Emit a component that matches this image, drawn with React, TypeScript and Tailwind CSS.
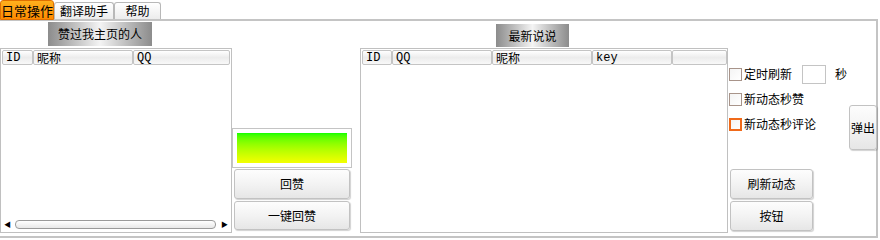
import React from 'react';

const FONT = { fontFamily: '"Noto Sans CJK SC", "Noto Sans", sans-serif' };

const HeaderCell: React.FC<{ label: string; width: string; mono?: boolean }> = ({ label, width, mono }) => (
  <div
    className={`${width} h-[15px] shrink-0 border border-[#c4c4c4] rounded-[2px] bg-linear-to-b from-[#ffffff] via-[#ececec] to-[#f8f8f8] flex items-center pl-[3px] text-[12px] leading-none text-black`}
    style={mono ? { fontFamily: '"Liberation Mono", monospace' } : undefined}
  >
    {label}
  </div>
);

const Btn: React.FC<{ label: string; className: string }> = ({ label, className }) => (
  <div
    className={`${className} shrink-0 border border-[#c2c2c2] rounded-[3px] bg-linear-to-b from-[#fdfdfd] via-[#f3f3f3] to-[#e6e6e6] shadow-[1px_1px_1px_rgba(0,0,0,0.18)] flex items-center justify-center text-[12px] text-black`}
  >
    {label}
  </div>
);

const Check: React.FC<{ label: string; active?: boolean }> = ({ label, active }) => (
  <div className="flex items-center">
    <div
      className={`w-[13px] h-[13px] ml-[1px] bg-linear-to-br from-[#f4f4f4] to-[#ffffff] ${
        active ? 'border-2 border-[#f06a1a]' : 'border border-[#a8948a]'
      }`}
    />
    <span className="ml-[2px] text-[12px] leading-none text-black">{label}</span>
  </div>
);

const GrayTitle: React.FC<{ label: string; className: string }> = ({ label, className }) => (
  <div
    className={`${className} shrink-0 bg-linear-to-r from-[#8c8c8c] via-[#f4f4f4] to-[#8c8c8c] flex items-center justify-center text-[12px] text-black`}
  >
    {label}
  </div>
);

export default function App() {
  return (
    <div className="w-[880px] h-[240px] bg-white overflow-hidden" style={FONT}>
      {/* tabs */}
      <div className="flex h-[19px] items-end">
        <div className="w-[54px] h-[20px] self-start border border-[#e07000] rounded-t-[3px] bg-linear-to-b from-[#ffb01c] to-[#ff8a00] flex items-center text-[13px] text-black leading-none pl-[0px]">
          日常操作
        </div>
        <div className="w-[60px] h-[17px] border border-[#b8b8b8] border-b-0 rounded-t-[3px] bg-linear-to-b from-[#ffffff] to-[#ececec] flex items-center justify-center text-[12px] text-black leading-none">
          翻译助手
        </div>
        <div className="w-[47px] h-[17px] border border-[#b8b8b8] border-b-0 rounded-t-[3px] bg-linear-to-b from-[#ffffff] to-[#ececec] flex items-center justify-center text-[12px] text-black leading-none">
          帮助
        </div>
      </div>

      {/* panel */}
      <div className="w-[878px] h-[219px] border-t-2 border-r-2 border-b-2 border-[#c4c4c4] flex">
        {/* left list */}
        <div className="w-[232px] shrink-0 flex flex-col">
          <GrayTitle label="赞过我主页的人" className="ml-[48px] mt-[1px] w-[104px] h-[24px]" />
          <div className="mt-[2px] h-[185px] border border-[#c0c0c0] flex flex-col">
            <div className="flex mt-[1px] ml-[1px]">
              <HeaderCell label="ID" width="w-[31px]" mono />
              <HeaderCell label="昵称" width="w-[100px]" />
              <HeaderCell label="QQ" width="w-[97px]" mono />
            </div>
            <div className="flex-1" />
            <div className="h-[12px] mb-[2px] flex items-center px-[3px]">
              <span className="text-[7px] leading-none text-black">◀</span>
              <div className="ml-[4px] w-[201px] h-[9px] border border-[#9a9a9a] rounded-[4px] bg-linear-to-b from-[#ffffff] to-[#e8e8e8]" />
              <span className="ml-[5px] text-[7px] leading-none text-black">▶</span>
            </div>
          </div>
        </div>

        {/* middle */}
        <div className="w-[128px] shrink-0 flex flex-col">
          <div className="mt-[107px] w-[120px] h-[40px] border border-[#c4c4c4] bg-white p-[4px]">
            <div className="w-full h-full bg-linear-to-b from-[#00ff00] to-[#f4ff00]" />
          </div>
          <Btn label="回赞" className="mt-[1px] ml-[2px] w-[116px] h-[30px]" />
          <Btn label="一键回赞" className="mt-[2px] ml-[2px] w-[116px] h-[29px]" />
        </div>

        {/* right list */}
        <div className="w-[368px] shrink-0 flex flex-col">
          <GrayTitle label="最新说说" className="ml-[136px] mt-[3px] w-[73px] h-[23px]" />
          <div className="mt-[1px] h-[185px] border border-[#c0c0c0]">
            <div className="flex mt-[1px] ml-[1px]">
              <HeaderCell label="ID" width="w-[30px]" mono />
              <HeaderCell label="QQ" width="w-[100px]" mono />
              <HeaderCell label="昵称" width="w-[100px]" />
              <HeaderCell label="key" width="w-[80px]" mono />
              <HeaderCell label="" width="w-[55px]" />
            </div>
          </div>
        </div>

        {/* controls */}
        <div className="flex-1 flex">
          <div className="w-[121px] shrink-0 flex flex-col">
            <div className="mt-[43px] h-[20px] flex items-center">
              <Check label="定时刷新" />
              <div className="ml-[10px] w-[24px] h-[19px] border border-[#c4c4c4] bg-white" />
              <span className="ml-[9px] text-[12px] leading-none text-black">秒</span>
            </div>
            <div className="mt-[8px] h-[14px] flex items-center">
              <Check label="新动态秒赞" />
            </div>
            <div className="mt-[11px] h-[14px] flex items-center">
              <Check label="新动态秒评论" active />
            </div>
            <Btn label="刷新动态" className="mt-[38px] ml-[2px] w-[83px] h-[30px]" />
            <Btn label="按钮" className="mt-[2px] ml-[2px] w-[83px] h-[30px]" />
          </div>
          <Btn label="弹出" className="mt-[84px] w-[28px] h-[45px]" />
        </div>
      </div>
    </div>
  );
}
